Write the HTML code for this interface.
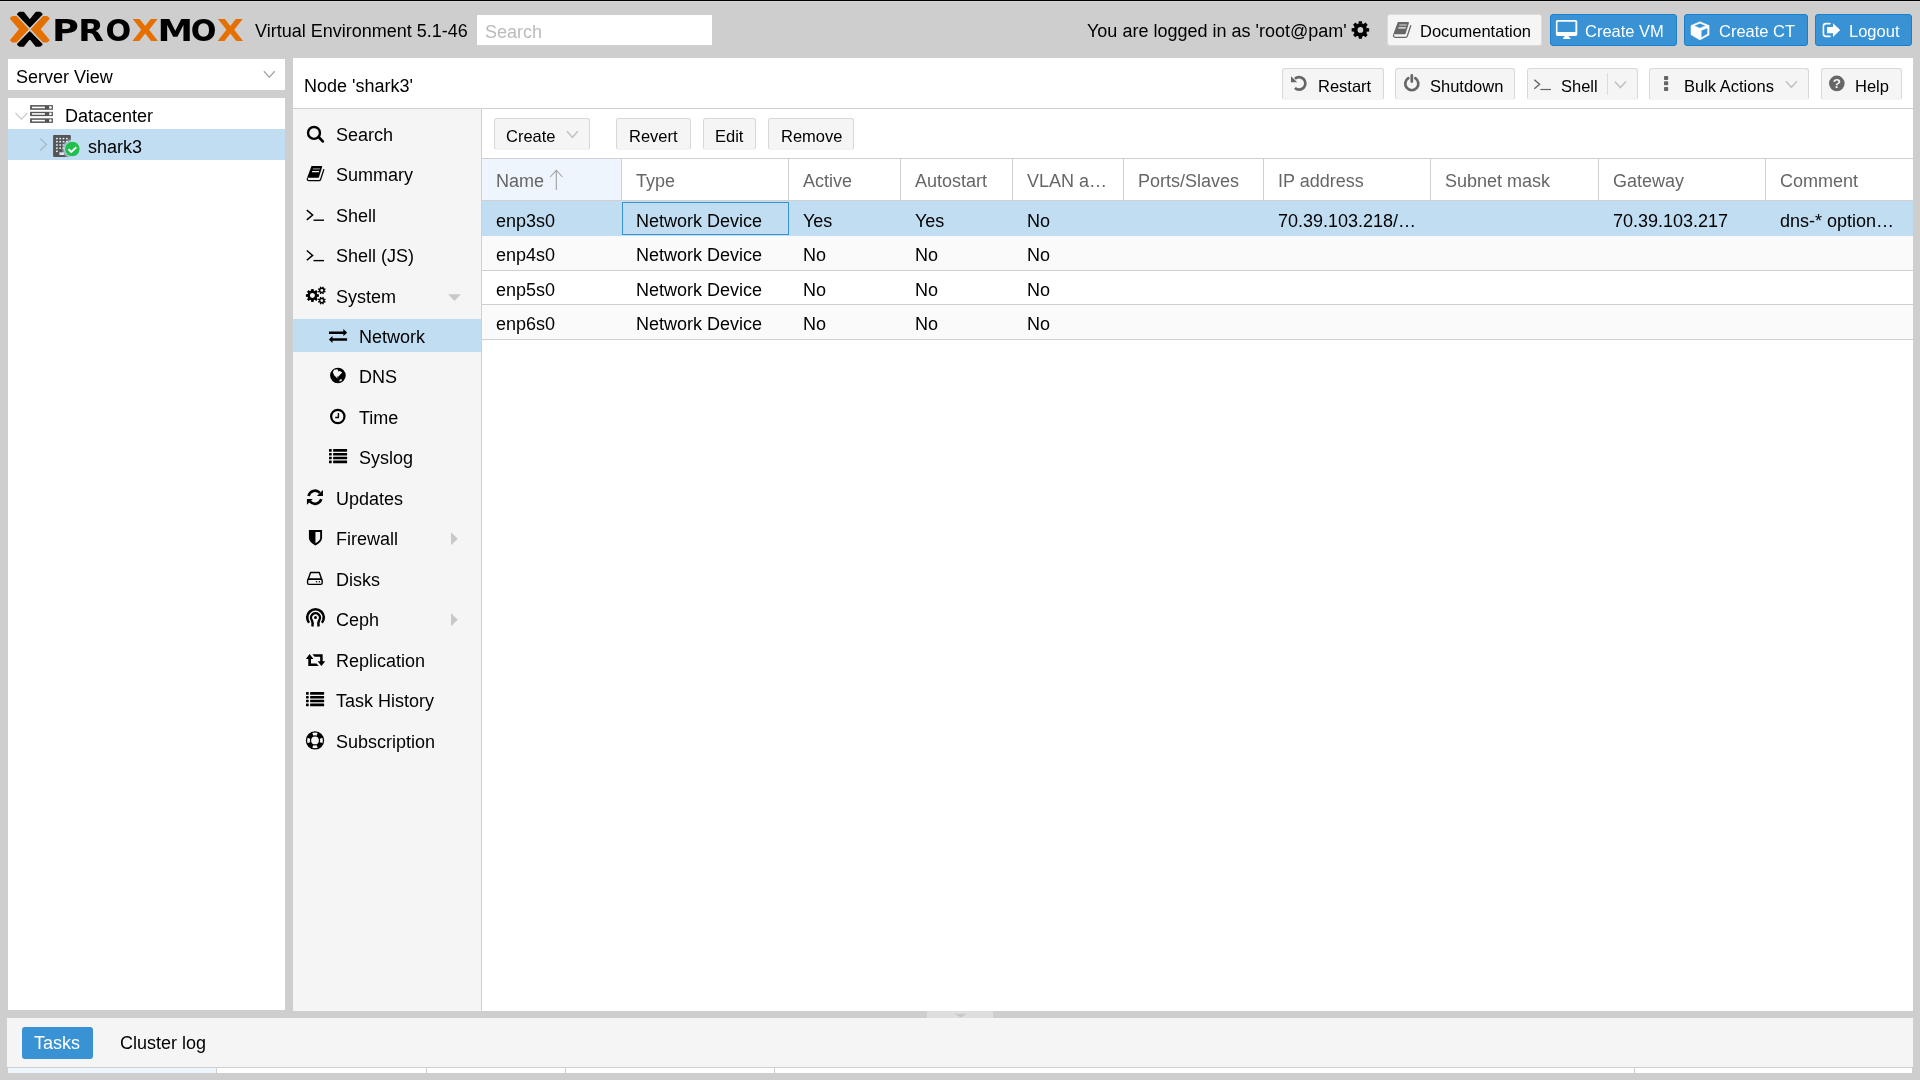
<!DOCTYPE html>
<html lang="en">
<head>
<meta charset="utf-8">
<title>shark3 - Proxmox Virtual Environment</title>
<style>
*{box-sizing:border-box;margin:0;padding:0}
html,body{width:1920px;height:1080px;overflow:hidden;background:#cecece}
body{position:relative;font-family:"Liberation Sans",Arial,Helvetica,sans-serif;font-size:18px;color:#000;line-height:22px}
.a{position:absolute}
.t{position:absolute;white-space:nowrap;line-height:22px;height:22px;will-change:transform}
.w{background:#fff}
.btn{position:absolute;height:32px;border:1px solid #d8d8d8;border-bottom-color:#f3f3f3;background:#f5f5f5;border-radius:3px}
.bb{position:absolute;height:32px;border:1px solid #1a7fcc;background:#3892d4;border-radius:3px}
.s{font-size:16.5px}
.wh{color:#fff}
.g{color:#666}
.sel{background:#c1ddf1}
.ln{position:absolute;background:#d0d0d0}
svg{position:absolute;overflow:visible}
</style>
</head>
<body>
<div class="a" style="left:0;top:0;width:1920px;height:1px;background:#000"></div>
<div class="a" style="left:0;top:1px;width:1920px;height:1px;background:#d6d6d6"></div>
<!--LOGO-->
<svg style="left:0;top:0;will-change:transform" width="260" height="58" viewBox="0 0 260 58">
<g stroke-linejoin="round" stroke-width="1.6">
<path d="M17.8 14.2 L19.6 12.6 L23.4 12.6 L29.8 20.6 L36.2 12.6 L40 12.6 L41.8 14.2 L29.8 26.6 Z" fill="#000" stroke="#000"/>
<path d="M17.8 44.4 L19.6 46 L23.4 46 L29.8 38 L36.2 46 L40 46 L41.8 44.4 L29.8 32 Z" fill="#000" stroke="#000"/>
<path d="M10.8 18.4 L12.6 16.9 L16.2 16.9 L27.9 29.3 L16.2 41.7 L12.6 41.7 L10.8 40.2 L20 29.3 Z" fill="#e57000" stroke="#e57000"/>
<path d="M48.8 18.4 L47 16.9 L43.4 16.9 L31.7 29.3 L43.4 41.7 L47 41.7 L48.8 40.2 L39.6 29.3 Z" fill="#e57000" stroke="#e57000"/>
</g>
<text y="41" font-family="DejaVu Sans, Liberation Sans, sans-serif" font-weight="700" font-size="31"><tspan x="51.9" textLength="26.9" lengthAdjust="spacingAndGlyphs" fill="#000">P</tspan><tspan x="78.2" textLength="25.7" lengthAdjust="spacingAndGlyphs" fill="#000">R</tspan><tspan x="105.5" textLength="25.7" lengthAdjust="spacingAndGlyphs" fill="#000">O</tspan><tspan x="131.8" textLength="26.9" lengthAdjust="spacingAndGlyphs" fill="#e57000">X</tspan><tspan x="157.4" textLength="35.6" lengthAdjust="spacingAndGlyphs" fill="#000">M</tspan><tspan x="190.8" textLength="25.7" lengthAdjust="spacingAndGlyphs" fill="#000">O</tspan><tspan x="217" textLength="26.7" lengthAdjust="spacingAndGlyphs" fill="#e57000">X</tspan></text>
</svg>
<div class="t" style="left:255px;top:20px">Virtual Environment 5.1-46</div>
<div class="a w" style="left:477px;top:15px;width:235px;height:30px"></div>
<div class="t" style="left:485px;top:21px;color:#bbb">Search</div>
<div class="t" style="left:1087px;top:20px">You are logged in as 'root@pam'</div>
<!--GEAR-->
<div class="btn" style="left:1387px;top:14px;width:155px;border-color:#dcdcdc"></div>
<div class="t s" style="left:1420px;top:20px">Documentation</div>
<div class="bb" style="left:1550px;top:14px;width:127px"></div>
<div class="t s wh" style="left:1585px;top:20px">Create VM</div>
<div class="bb" style="left:1684px;top:14px;width:124px"></div>
<div class="t s wh" style="left:1719px;top:20px">Create CT</div>
<div class="bb" style="left:1815px;top:14px;width:97px"></div>
<div class="t s wh" style="left:1849px;top:20px">Logout</div>

<div class="a w" style="left:8px;top:59px;width:277px;height:31px"></div>
<div class="t" style="left:16px;top:66px">Server View</div>
<div class="a w" style="left:8px;top:98px;width:277px;height:912px"></div>
<div class="t" style="left:65px;top:105px">Datacenter</div>
<div class="a sel" style="left:8px;top:129px;width:277px;height:31px"></div>
<div class="t" style="left:88px;top:136px">shark3</div>

<div class="a w" style="left:293px;top:58px;width:1620px;height:953px"></div>
<div class="ln" style="left:293px;top:108px;width:1620px;height:1px"></div>
<div class="t" style="left:304px;top:75px">Node 'shark3'</div>
<div class="btn" style="left:1282px;top:68px;width:102px"></div>
<div class="t s" style="left:1318px;top:75px">Restart</div>
<div class="btn" style="left:1395px;top:68px;width:120px"></div>
<div class="t s" style="left:1430px;top:75px">Shutdown</div>
<div class="btn" style="left:1527px;top:68px;width:111px"></div>
<div class="t s" style="left:1561px;top:75px">Shell</div>
<div class="ln" style="left:1607px;top:73px;width:1px;height:22px;background:#dadada"></div>
<div class="btn" style="left:1649px;top:68px;width:160px"></div>
<div class="t s" style="left:1684px;top:75px">Bulk Actions</div>
<div class="btn" style="left:1821px;top:68px;width:81px"></div>
<div class="t s" style="left:1855px;top:75px">Help</div>
<!-- nav -->
<div class="a" style="left:293px;top:109px;width:188px;height:902px;background:#f5f5f5"></div>
<div class="ln" style="left:481px;top:109px;width:1px;height:902px;background:#d0d0d0"></div>
<div class="a sel" style="left:293px;top:319px;width:188px;height:33px"></div>
<div class="t" style="left:336px;top:124px">Search</div>
<div class="t" style="left:336px;top:164px">Summary</div>
<div class="t" style="left:336px;top:205px">Shell</div>
<div class="t" style="left:336px;top:245px">Shell (JS)</div>
<div class="t" style="left:336px;top:286px">System</div>
<div class="t" style="left:359px;top:326px">Network</div>
<div class="t" style="left:359px;top:366px">DNS</div>
<div class="t" style="left:359px;top:407px">Time</div>
<div class="t" style="left:359px;top:447px">Syslog</div>
<div class="t" style="left:336px;top:488px">Updates</div>
<div class="t" style="left:336px;top:528px">Firewall</div>
<div class="t" style="left:336px;top:569px">Disks</div>
<div class="t" style="left:336px;top:609px">Ceph</div>
<div class="t" style="left:336px;top:650px">Replication</div>
<div class="t" style="left:336px;top:690px">Task History</div>
<div class="t" style="left:336px;top:731px">Subscription</div>

<div class="btn" style="left:494px;top:118px;width:96px"></div>
<div class="t s" style="left:506px;top:125px">Create</div>
<div class="btn" style="left:616px;top:118px;width:75px"></div>
<div class="t s" style="left:629px;top:125px">Revert</div>
<div class="btn" style="left:703px;top:118px;width:53px"></div>
<div class="t s" style="left:715px;top:125px">Edit</div>
<div class="btn" style="left:768px;top:118px;width:86px"></div>
<div class="t s" style="left:781px;top:125px">Remove</div>
<!-- header -->
<div class="ln" style="left:482px;top:158px;width:1431px;height:1px"></div>
<div class="a" style="left:482px;top:159px;width:139px;height:41px;background:#eef5fc"></div>
<div class="ln" style="left:482px;top:200px;width:1431px;height:1px"></div>
<div class="ln" style="left:621px;top:159px;width:1px;height:41px"></div>
<div class="ln" style="left:788px;top:159px;width:1px;height:41px"></div>
<div class="ln" style="left:900px;top:159px;width:1px;height:41px"></div>
<div class="ln" style="left:1012px;top:159px;width:1px;height:41px"></div>
<div class="ln" style="left:1123px;top:159px;width:1px;height:41px"></div>
<div class="ln" style="left:1263px;top:159px;width:1px;height:41px"></div>
<div class="ln" style="left:1430px;top:159px;width:1px;height:41px"></div>
<div class="ln" style="left:1598px;top:159px;width:1px;height:41px"></div>
<div class="ln" style="left:1765px;top:159px;width:1px;height:41px"></div>
<div class="t g" style="left:496px;top:170px">Name</div>
<div class="t g" style="left:636px;top:170px">Type</div>
<div class="t g" style="left:803px;top:170px">Active</div>
<div class="t g" style="left:915px;top:170px">Autostart</div>
<div class="t g" style="left:1027px;top:170px">VLAN a…</div>
<div class="t g" style="left:1138px;top:170px">Ports/Slaves</div>
<div class="t g" style="left:1278px;top:170px">IP address</div>
<div class="t g" style="left:1445px;top:170px">Subnet mask</div>
<div class="t g" style="left:1613px;top:170px">Gateway</div>
<div class="t g" style="left:1780px;top:170px">Comment</div>
<!-- rows -->
<div class="a sel" style="left:482px;top:201px;width:1431px;height:35px"></div>
<div class="a" style="left:622px;top:202px;width:167px;height:33px;border:1px solid #3892d4"></div>
<div class="a" style="left:482px;top:236px;width:1431px;height:34px;background:#fafafa"></div>
<div class="ln" style="left:482px;top:270px;width:1431px;height:1px"></div>
<div class="ln" style="left:482px;top:304px;width:1431px;height:1px"></div>
<div class="a" style="left:482px;top:305px;width:1431px;height:34px;background:#fafafa"></div>
<div class="ln" style="left:482px;top:339px;width:1431px;height:1px"></div>
<div class="t" style="left:496px;top:210px">enp3s0</div>
<div class="t" style="left:636px;top:210px">Network Device</div>
<div class="t" style="left:803px;top:210px">Yes</div>
<div class="t" style="left:915px;top:210px">Yes</div>
<div class="t" style="left:1027px;top:210px">No</div>
<div class="t" style="left:1278px;top:210px">70.39.103.218/…</div>
<div class="t" style="left:1613px;top:210px">70.39.103.217</div>
<div class="t" style="left:1780px;top:210px">dns-* option…</div>
<div class="t" style="left:496px;top:244px">enp4s0</div>
<div class="t" style="left:636px;top:244px">Network Device</div>
<div class="t" style="left:803px;top:244px">No</div>
<div class="t" style="left:915px;top:244px">No</div>
<div class="t" style="left:1027px;top:244px">No</div>
<div class="t" style="left:496px;top:279px">enp5s0</div>
<div class="t" style="left:636px;top:279px">Network Device</div>
<div class="t" style="left:803px;top:279px">No</div>
<div class="t" style="left:915px;top:279px">No</div>
<div class="t" style="left:1027px;top:279px">No</div>
<div class="t" style="left:496px;top:313px">enp6s0</div>
<div class="t" style="left:636px;top:313px">Network Device</div>
<div class="t" style="left:803px;top:313px">No</div>
<div class="t" style="left:915px;top:313px">No</div>
<div class="t" style="left:1027px;top:313px">No</div>

<div class="a" style="left:927px;top:1011px;width:66px;height:7px;background:#dedede"></div>
<svg style="left:953px;top:1013px" width="16" height="5" viewBox="0 0 16 5"><path d="M1.2 0.8 H14.2 L7.7 4.6Z" fill="#c9c9c9"/></svg>
<div class="a" style="left:7px;top:1018px;width:1906px;height:49px;background:#f5f5f5"></div>
<div class="ln" style="left:8px;top:1067px;width:1905px;height:1px"></div>
<div class="a w" style="left:8px;top:1068px;width:1904px;height:5px"></div>
<div class="a" style="left:8px;top:1068px;width:208px;height:5px;background:#eef5fc"></div>
<div class="ln" style="left:216px;top:1068px;width:1px;height:5px"></div>
<div class="ln" style="left:426px;top:1068px;width:1px;height:5px"></div>
<div class="ln" style="left:565px;top:1068px;width:1px;height:5px"></div>
<div class="ln" style="left:774px;top:1068px;width:1px;height:5px"></div>
<div class="ln" style="left:1634px;top:1068px;width:1px;height:5px"></div>
<div class="a" style="left:22px;top:1027px;width:71px;height:32px;background:#3892d4;border-radius:3px"></div>
<div class="t wh" style="left:34px;top:1032px">Tasks</div>
<div class="t" style="left:120px;top:1032px">Cluster log</div>
<svg style="left:0;top:0;will-change:transform" width="1920" height="1080" viewBox="0 0 1920 1080">
<circle cx="1360.4" cy="29.9" r="4.8" fill="none" stroke="#000" stroke-width="3.8"/>
<path d="M1366.5 31.85 L1369.15 31.45 L1369.15 28.35 L1366.5 27.95ZM1363.33 35.59 L1365.49 37.18 L1367.68 34.99 L1366.09 32.83ZM1358.45 36 L1358.85 38.65 L1361.95 38.65 L1362.35 36ZM1354.71 32.83 L1353.12 34.99 L1355.31 37.18 L1357.47 35.59ZM1354.3 27.95 L1351.65 28.35 L1351.65 31.45 L1354.3 31.85ZM1357.47 24.21 L1355.31 22.62 L1353.12 24.81 L1354.71 26.97ZM1362.35 23.8 L1361.95 21.15 L1358.85 21.15 L1358.45 23.8ZM1366.09 26.97 L1367.68 24.81 L1365.49 22.62 L1363.33 24.21Z" fill="#000"/>
<path d="M311.5 165.92 L321.5 165.92 Q322.42 165.92 322.12 166.92 L318.92 177.17 Q318.71 177.83 318 177.83 L307.08 177.83 Z" fill="#000"/>
<path d="M307.33 178.5 Q307.17 180.67 308.92 180.67 L319.12 180.67 Q320.17 180.67 320.58 179.54 L323.83 169.54" fill="none" stroke="#000" stroke-width="1.25" stroke-linecap="round"/>
<path d="M313 168.21 L320.08 168.21 L319.75 169.58 L312.67 169.58Z" fill="#f5f5f5" opacity="0.55"/>
<path d="M312.17 171.08 L319.25 171.08 L318.96 172.17 L311.88 172.17Z" fill="#f5f5f5"/>
<path d="M1397.86 21.93 L1408.26 21.93 Q1409.21 21.93 1408.91 22.97 L1405.57 33.64 Q1405.36 34.33 1404.62 34.33 L1393.26 34.33 Z" fill="#666"/>
<path d="M1393.52 35.02 Q1393.35 37.28 1395.17 37.28 L1405.79 37.28 Q1406.87 37.28 1407.31 36.11 L1410.69 25.7" fill="none" stroke="#666" stroke-width="1.3" stroke-linecap="round"/>
<path d="M1399.42 24.31 L1406.79 24.31 L1406.44 25.75 L1399.07 25.75Z" fill="#f5f5f5" opacity="0.55"/>
<path d="M1398.55 27.31 L1405.92 27.31 L1405.62 28.43 L1398.25 28.43Z" fill="#f5f5f5"/>
<path d="M1557.6 19.9 h18 a1.7 1.7 0 0 1 1.7 1.7 v12.7 a1.7 1.7 0 0 1 -1.7 1.7 h-18 a1.7 1.7 0 0 1 -1.7 -1.7 v-12.7 a1.7 1.7 0 0 1 1.7 -1.7Z M1557.5 21.7 v10.3 h17.9 v-10.3Z" fill="#fff" fill-rule="evenodd"/>
<path d="M1564.6 35.9 h4.2 l0.6 1.7 h0.9 v1.4 h-7.2 v-1.4 h0.9Z" fill="#fff"/>
<path d="M1699.9 21.75 L1709.1 25.5 L1709.1 34.9 L1699.9 39.9 L1691 34.7 L1691 25.5Z M1699.9 23.2 L1706 25.7 L1699.9 28.2 L1694.1 25.7Z M1701.2 30.5 L1707.6 27.8 L1707.6 34 L1701.2 37.8Z" fill="#fff" fill-rule="evenodd" stroke="#fff" stroke-width="0.5" stroke-linejoin="round"/>
<path d="M1830 23.6 h-4 a2.6 2.6 0 0 0 -2.6 2.6 v7.6 a2.6 2.6 0 0 0 2.6 2.6 h4" fill="none" stroke="#fff" stroke-width="1.6" stroke-linecap="round"/>
<path d="M1827 27 H1833 V23.2 L1840.2 30 L1833 36.9 V33.2 H1827Z" fill="#fff"/>
<path d="M1294.92 78.76 A6.25 6.25 0 1 1 1294.92 88.04" fill="none" stroke="#666" stroke-width="2.7" stroke-linecap="butt"/>
<path d="M1291 76.3 V82.2 H1297.2Z" fill="#666"/>
<path d="M1415.27 78.15 A6.55 6.55 0 1 1 1408.33 78.15" fill="none" stroke="#666" stroke-width="2.7" stroke-linecap="round"/>
<path d="M1411.8 75.4 V81.6" stroke="#666" stroke-width="2.7" stroke-linecap="round"/>
<path d="M1534.3 79.7 L1539.6 84.3 L1534.3 88.8" fill="none" stroke="#666" stroke-width="1.4"/>
<path d="M1540.4 89.5 H1551" stroke="#666" stroke-width="1.2"/>
<rect x="1664" y="76" width="4.2" height="4" fill="#666" rx="0.7"/>
<rect x="1664" y="81.3" width="4.2" height="4" fill="#666" rx="0.7"/>
<rect x="1664" y="87" width="4.2" height="4" fill="#666" rx="0.7"/>
<circle cx="1836.8" cy="83.4" r="7.8" fill="#666"/>
<text x="1836.8" y="88.2" text-anchor="middle" font-family="Liberation Sans, Arial, sans-serif" font-weight="700" font-size="13.5" fill="#f5f5f5">?</text>
<path d="M263.9 71.2 L269.3 77.2 L274.7 71.2" fill="none" stroke="#a8a8a8" stroke-width="1.4"/>
<path d="M1614.8 81.4 L1620.4 87.6 L1626 81.4" fill="none" stroke="#c2c2c2" stroke-width="1.5"/>
<path d="M1785.9 81.2 L1791.4 87.3 L1796.9 81.2" fill="none" stroke="#c2c2c2" stroke-width="1.5"/>
<path d="M567 131.3 L572.4 137.3 L577.8 131.3" fill="none" stroke="#c2c2c2" stroke-width="1.5"/>
<path d="M15.5 113 L21.4 119.2 L27.4 113" fill="none" stroke="#c6c6c6" stroke-width="1.1"/>
<path d="M40.2 138.7 L46.5 144.5 L40.2 150.5" fill="none" stroke="#a7b4bf" stroke-width="1.1"/>
<path d="M556.3 189.9 V170.3 M550.2 177 L556.3 170.2 L562.5 177" fill="none" stroke="#a0a0a0" stroke-width="1.1"/>
<rect x="30.1" y="105.1" width="22.8" height="4.7" fill="#555"/>
<rect x="31.9" y="106.65" width="13" height="1.6" fill="#fff"/>
<circle cx="50.4" cy="107.45" r="1.35" fill="#fff"/>
<rect x="30.1" y="111.8" width="22.8" height="4.3" fill="#555"/>
<rect x="31.9" y="113.15" width="13" height="1.6" fill="#fff"/>
<circle cx="50.4" cy="113.95" r="1.35" fill="#fff"/>
<rect x="30.1" y="118.3" width="22.8" height="4.6" fill="#555"/>
<rect x="31.9" y="119.8" width="13" height="1.6" fill="#fff"/>
<circle cx="50.4" cy="120.6" r="1.35" fill="#fff"/>
<defs><radialGradient id="fade" gradientUnits="userSpaceOnUse" cx="72.3" cy="149" r="10.8"><stop offset="0.68" stop-color="#000"/><stop offset="1" stop-color="#fff"/></radialGradient><mask id="bm"><rect x="50" y="132" width="26" height="28" fill="url(#fade)"/></mask></defs>
<g mask="url(#bm)"><rect x="53.1" y="135" width="17.7" height="21.9" rx="0.8" fill="#555"/><rect x="56.05" y="137.85" width="1.7" height="1.5" fill="#e6f0fa"/><rect x="56.05" y="140.95" width="1.7" height="1.5" fill="#e6f0fa"/><rect x="56.05" y="144.25" width="1.7" height="1.5" fill="#e6f0fa"/><rect x="56.05" y="147.45" width="1.7" height="1.5" fill="#e6f0fa"/><rect x="56.05" y="150.55" width="1.7" height="1.5" fill="#e6f0fa"/><rect x="59.35" y="137.85" width="1.7" height="1.5" fill="#e6f0fa"/><rect x="59.35" y="140.95" width="1.7" height="1.5" fill="#e6f0fa"/><rect x="59.35" y="144.25" width="1.7" height="1.5" fill="#e6f0fa"/><rect x="59.35" y="147.45" width="1.7" height="1.5" fill="#e6f0fa"/><rect x="62.65" y="137.85" width="1.7" height="1.5" fill="#e6f0fa"/><rect x="62.65" y="140.95" width="1.7" height="1.5" fill="#e6f0fa"/><rect x="62.65" y="144.25" width="1.7" height="1.5" fill="#e6f0fa"/><rect x="62.65" y="147.45" width="1.7" height="1.5" fill="#e6f0fa"/><rect x="66.05" y="137.85" width="1.7" height="1.5" fill="#e6f0fa"/><rect x="66.05" y="140.95" width="1.7" height="1.5" fill="#e6f0fa"/><rect x="66.05" y="144.25" width="1.7" height="1.5" fill="#e6f0fa"/><rect x="66.05" y="147.45" width="1.7" height="1.5" fill="#e6f0fa"/><rect x="59.4" y="152.3" width="4.8" height="2.7" fill="#dbe8f5"/></g>
<circle cx="72.3" cy="149" r="7.3" fill="#21bf4b"/>
<path d="M68.5 149.2 L71.3 151.9 L76.3 147.2" fill="none" stroke="#fff" stroke-width="1.9"/>
<circle cx="314" cy="132.9" r="5.95" fill="none" stroke="#000" stroke-width="2.4"/>
<path d="M318.6 137 L322.8 141.4" stroke="#000" stroke-width="2.7" stroke-linecap="round"/>
<path d="M306.8 210.1 L312.6 215 L306.8 219.9" fill="none" stroke="#000" stroke-width="1.5"/>
<path d="M313.5 220.2 H324" stroke="#000" stroke-width="1.4"/>
<path d="M306.8 250.5 L312.6 255.4 L306.8 260.3" fill="none" stroke="#000" stroke-width="1.5"/>
<path d="M313.5 260.6 H324" stroke="#000" stroke-width="1.4"/>
<circle cx="312.4" cy="295.5" r="3.7" fill="none" stroke="#000" stroke-width="2.4"/>
<path d="M316.7 296.95 L318.9 296.65 L318.9 294.35 L316.7 294.05ZM314.42 299.57 L316.18 300.91 L317.81 299.28 L316.47 297.52ZM310.95 299.8 L311.25 302 L313.55 302 L313.85 299.8ZM308.33 297.52 L306.99 299.28 L308.62 300.91 L310.38 299.57ZM308.1 294.05 L305.9 294.35 L305.9 296.65 L308.1 296.95ZM310.38 291.43 L308.62 290.09 L306.99 291.72 L308.33 293.48ZM313.85 291.2 L313.55 289 L311.25 289 L310.95 291.2ZM316.47 293.48 L317.81 291.72 L316.18 290.09 L314.42 291.43Z" fill="#000"/>
<circle cx="321.8" cy="290.4" r="2.12" fill="none" stroke="#000" stroke-width="1.35"/>
<path d="M323.55 291.93 L325.22 292.47 L325.68 291.36 L324.12 290.55ZM321.95 292.72 L322.76 294.28 L323.87 293.82 L323.33 292.15ZM320.27 292.15 L319.73 293.82 L320.84 294.28 L321.65 292.72ZM319.48 290.55 L317.92 291.36 L318.38 292.47 L320.05 291.93ZM320.05 288.87 L318.38 288.33 L317.92 289.44 L319.48 290.25ZM321.65 288.08 L320.84 286.52 L319.73 286.98 L320.27 288.65ZM323.33 288.65 L323.87 286.98 L322.76 286.52 L321.95 288.08ZM324.12 290.25 L325.68 289.44 L325.22 288.33 L323.55 288.87Z" fill="#000"/>
<circle cx="321.8" cy="300.6" r="2.12" fill="none" stroke="#000" stroke-width="1.35"/>
<path d="M323.55 302.13 L325.22 302.67 L325.68 301.56 L324.12 300.75ZM321.95 302.92 L322.76 304.48 L323.87 304.02 L323.33 302.35ZM320.27 302.35 L319.73 304.02 L320.84 304.48 L321.65 302.92ZM319.48 300.75 L317.92 301.56 L318.38 302.67 L320.05 302.13ZM320.05 299.07 L318.38 298.53 L317.92 299.64 L319.48 300.45ZM321.65 298.28 L320.84 296.72 L319.73 297.18 L320.27 298.85ZM323.33 298.85 L323.87 297.18 L322.76 296.72 L321.95 298.28ZM324.12 300.45 L325.68 299.64 L325.22 298.53 L323.55 299.07Z" fill="#000"/>
<path d="M448.2 294.3 H460.8 L454.5 301Z" fill="#c8c8c8"/>
<path d="M451 532.2 V545.2 L457.8 538.7Z" fill="#c8c8c8"/>
<path d="M451 613.2 V626.2 L457.8 619.7Z" fill="#c8c8c8"/>
<path d="M328.96 331.42 L343.33 331.42 L343.33 329 L347.17 332.67 L343.33 336.08 L343.33 333.92 L328.96 333.92Z" fill="#000"/>
<path d="M347.08 338.29 L332.5 338.29 L332.5 335.92 L328.88 339.54 L332.5 342.96 L332.5 340.79 L347.08 340.79Z" fill="#000"/>
<circle cx="337.9" cy="375.5" r="7.8" fill="#000"/>
<path d="M332.83 372.04 L334.17 369.83 L337.29 369.17 L338.33 370.38 L337.71 371.5 L339.92 371.08 L342.17 372.58 L339.58 375.25 L338.42 376.75 L337.17 376.33 L337.5 378 L339.25 379.42 L336.67 377.75 L334.08 375.25Z" fill="#f5f5f5"/>
<path d="M339.5 379.83 L341.46 379.04 L341.96 380.58 L339.58 381.67Z" fill="#f5f5f5"/>
<circle cx="337.8" cy="416.5" r="6.65" fill="none" stroke="#000" stroke-width="2.2"/>
<path d="M338.4 412.9 V417.5 H335.2" fill="none" stroke="#000" stroke-width="1.4"/>
<rect x="329" y="449.1" width="2.7" height="2.6" fill="#000" rx="0.5"/>
<rect x="333.1" y="449.1" width="14" height="2.6" fill="#000" rx="0.5"/>
<rect x="329" y="452.92" width="2.7" height="2.6" fill="#000" rx="0.5"/>
<rect x="333.1" y="452.92" width="14" height="2.6" fill="#000" rx="0.5"/>
<rect x="329" y="456.74" width="2.7" height="2.6" fill="#000" rx="0.5"/>
<rect x="333.1" y="456.74" width="14" height="2.6" fill="#000" rx="0.5"/>
<rect x="329" y="460.56" width="2.7" height="2.6" fill="#000" rx="0.5"/>
<rect x="333.1" y="460.56" width="14" height="2.6" fill="#000" rx="0.5"/>
<rect x="306" y="692.1" width="2.7" height="2.6" fill="#000" rx="0.5"/>
<rect x="310.1" y="692.1" width="14" height="2.6" fill="#000" rx="0.5"/>
<rect x="306" y="695.92" width="2.7" height="2.6" fill="#000" rx="0.5"/>
<rect x="310.1" y="695.92" width="14" height="2.6" fill="#000" rx="0.5"/>
<rect x="306" y="699.74" width="2.7" height="2.6" fill="#000" rx="0.5"/>
<rect x="310.1" y="699.74" width="14" height="2.6" fill="#000" rx="0.5"/>
<rect x="306" y="703.56" width="2.7" height="2.6" fill="#000" rx="0.5"/>
<rect x="310.1" y="703.56" width="14" height="2.6" fill="#000" rx="0.5"/>
<path d="M308.57 496 A6.55 6.55 0 0 1 319.87 492.87" fill="none" stroke="#000" stroke-width="2.6" stroke-linecap="butt"/>
<path d="M321.26 499.17 A6.55 6.55 0 0 1 309.98 501.46" fill="none" stroke="#000" stroke-width="2.6" stroke-linecap="butt"/>
<path d="M322.96 490 L322.96 496 L316.96 496Z" fill="#000"/>
<path d="M306.96 499.04 L306.96 504.75 L312.75 499.04Z" fill="#000"/>
<path d="M308.92 530.08 L322.04 530.08 L322.04 538 Q321.83 542.17 315.46 545.58 Q309.12 542.17 308.92 538 Z M315.46 531.96 L320.17 531.96 L320.17 538 Q319.96 540.83 315.46 543.25 Z" fill="#000" fill-rule="evenodd"/>
<path d="M310.58 572.54 L319.33 572.54 L321.62 579.21 L308.17 579.21 Z" fill="none" stroke="#000" stroke-width="1.4" stroke-linejoin="round"/>
<rect x="307.58" y="579.21" width="14.58" height="5.12" rx="1.3" fill="none" stroke="#000" stroke-width="1.4"/>
<circle cx="316.5" cy="581.75" r="0.75" fill="#000"/>
<circle cx="319.33" cy="581.75" r="0.75" fill="#000"/>
<path d="M309.05 622.72 A8.3 8.3 0 1 1 321.95 622.72" fill="none" stroke="#000" stroke-width="2.6" stroke-linecap="butt"/>
<path d="M312.4 626.6 C313 623.5 312.8 622 311.9 620.4 A4.5 4.5 0 1 1 319.1 620.4 C318.2 622 318 623.5 318.6 626.6" fill="none" stroke="#000" stroke-width="2.4"/>
<circle cx="315.5" cy="617.5" r="1.5" fill="#000"/>
<path d="M309.54 654.08 L313.42 658.96 L311 658.96 L311 663.54 L316.5 663.54 L318.79 665.92 L308.29 665.92 L308.29 658.96 L305.92 658.96Z" fill="#000"/>
<path d="M321.42 665.92 L317.58 661.25 L320.17 661.25 L320.17 656.67 L314.62 656.67 L312.38 654.29 L322.67 654.29 L322.67 661.25 L325.25 661.25Z" fill="#000"/>
<circle cx="315" cy="740.4" r="8.55" fill="none" stroke="#000" stroke-width="1.25"/>
<circle cx="315" cy="740.4" r="4.5" fill="none" stroke="#000" stroke-width="1.25"/>
<path d="M321.11 742.62 A6.5 6.5 0 0 1 317.22 746.51" fill="none" stroke="#000" stroke-width="4.2"/>
<path d="M312.78 746.51 A6.5 6.5 0 0 1 308.89 742.62" fill="none" stroke="#000" stroke-width="4.2"/>
<path d="M308.89 738.18 A6.5 6.5 0 0 1 312.78 734.29" fill="none" stroke="#000" stroke-width="4.2"/>
<path d="M317.22 734.29 A6.5 6.5 0 0 1 321.11 738.18" fill="none" stroke="#000" stroke-width="4.2"/>
</svg>

</body>
</html>
